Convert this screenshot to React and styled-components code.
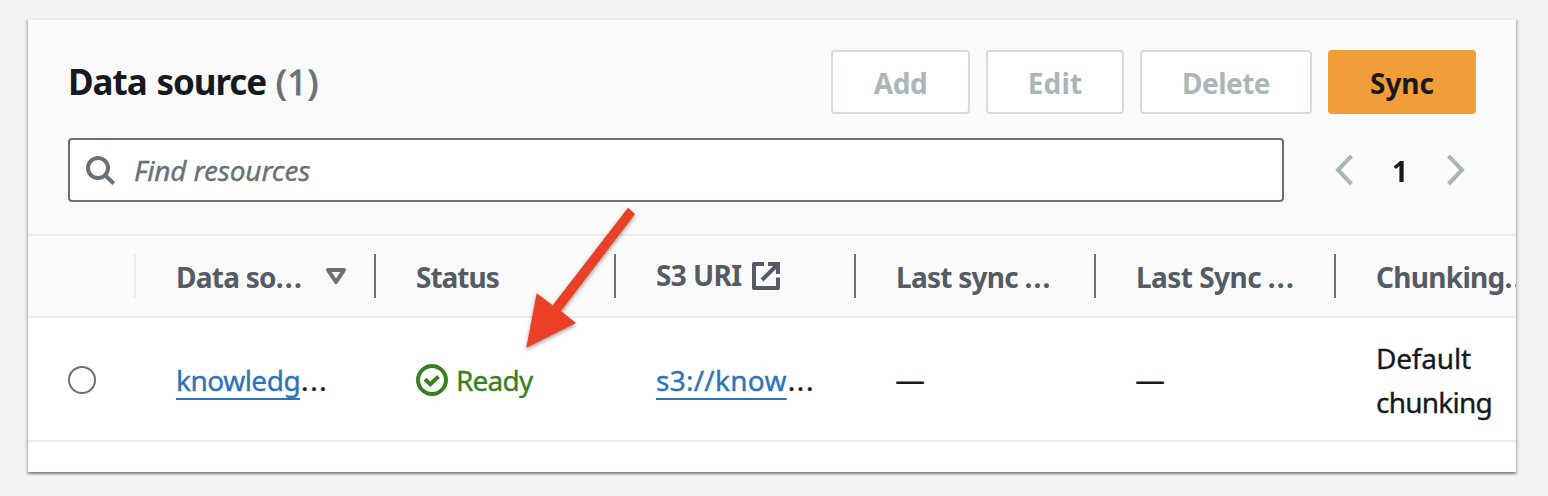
import React from "react";
import styled, { createGlobalStyle, css } from "styled-components";

const GlobalStyle = createGlobalStyle`
  * { box-sizing: border-box; }
  body {
    margin: 0;
    background: #f2f3f3;
    color: #16191f;
    font-family: "Noto Sans", "Open Sans", sans-serif;
    font-size: 28px;
    line-height: 44px;
  }
`;

const Page = styled.main`
  position: relative;
  height: 496px;
  padding: 18px 32px 0 28px;
  overflow: hidden;
`;

const Card = styled.section`
  height: 454px;
  border-top: 2px solid #eaeded;
  background: #fff;
  box-shadow: 0 2px 2px 0 rgba(0, 28, 36, 0.3), 2px 2px 2px 0 rgba(0, 28, 36, 0.15),
    -2px 2px 2px 0 rgba(0, 28, 36, 0.15);
`;

const CardHeader = styled.header`
  height: 216px;
  padding: 30px 40px 0;
  background: #fafafa;
  border-bottom: 2px solid #eaeded;
`;

const TitleRow = styled.div`
  display: flex;
  align-items: center;
  justify-content: space-between;
  height: 64px;
`;

const Title = styled.h2`
  margin: 0 0 1px;
  font-size: 35px;
  font-weight: 700;
  letter-spacing: -1.05px;
  word-spacing: 1.8px;
  white-space: pre;
`;

const Counter = styled.span`
  color: #687078;
  font-weight: 400;
  letter-spacing: 0.6px;
  -webkit-text-stroke: 1px #687078;
`;

const Actions = styled.div`
  display: flex;
  gap: 16px;
`;

const Button = styled.button`
  width: ${(p) => p.$width}px;
  height: 64px;
  padding: 2px 0 0;
  border: 2px solid #d5dbdb;
  border-radius: 4px;
  background: #fff;
  color: #aab7b8;
  font: 700 28px/44px "Noto Sans", sans-serif;
  letter-spacing: ${(p) => p.$spacing}px;
  ${(p) =>
    p.$primary &&
    css`
      border-color: #f19e39;
      background: #f19e39;
      color: #16191f;
    `}
`;

const FilterRow = styled.div`
  display: flex;
  align-items: center;
  margin-top: 24px;
`;

const SearchBox = styled.div`
  display: flex;
  align-items: center;
  gap: 18px;
  width: 1216px;
  height: 64px;
  padding: 0 14px;
  border: 2px solid #687078;
  border-radius: 4px;
  background: #fff;
`;

const Placeholder = styled.span`
  color: #687078;
  font-style: italic;
  letter-spacing: -0.15px;
  -webkit-text-stroke: 0.35px #687078;
`;

const Pagination = styled.nav`
  display: flex;
  align-items: center;
  justify-content: space-between;
  width: 132px;
  margin-left: 50px;
`;

const PageNumber = styled.span`
  padding-top: 1px;
  font-weight: 700;
`;

const columns = "108px repeat(5, 240px) 172px";

const HeadRow = styled.div`
  display: grid;
  grid-template-columns: ${columns};
  align-items: center;
  height: 82px;
  overflow: hidden;
  background: #fafafa;
  border-bottom: 2px solid #eaeded;
`;

const HeadCell = styled.div`
  display: flex;
  align-items: center;
  height: 44px;
  padding-left: 40px;
  padding-right: ${(p) => (p.$last ? 0 : 28)}px;
  border-right: ${(p) => (p.$last ? "0" : `2px solid ${p.$faint ? "#eaeded" : "#687078"}`)};
  color: #545b64;
  font-weight: 700;
  letter-spacing: ${(p) => p.$spacing || 0}px;
  white-space: nowrap;
  justify-content: ${(p) => (p.$split ? "space-between" : "flex-start")};
`;

const Label = styled.span`
  padding-top: 2px;
`;

const Dots = styled.span`
  letter-spacing: 1.2px;
`;

const RaisedLabel = styled.span`
  margin: -2px 8px 0 0;
`;

const BodyRow = styled.div`
  display: grid;
  grid-template-columns: ${columns};
  align-items: center;
  height: 124px;
  overflow: hidden;
  border-bottom: 2px solid #eaeded;
  -webkit-text-stroke: 0.35px;
`;

const Cell = styled.div`
  display: flex;
  align-items: center;
  padding: 2px 0 0 ${(p) => p.$indent ?? 40}px;
  letter-spacing: ${(p) => p.$spacing || 0}px;
`;

const Dash = styled.span`
  font-size: 30px;
  -webkit-text-stroke: 0;
`;

const Radio = styled.span`
  width: 28px;
  height: 28px;
  border: 2px solid #687078;
  border-radius: 50%;
  background: #fff;
`;

const Link = styled.a`
  color: #2e73b8;
  text-decoration: underline;
  text-decoration-thickness: 2px;
  text-underline-offset: 7px;
  text-decoration-skip-ink: none;
`;

const Ellipsis = styled.span`
  letter-spacing: 1.6px;
  padding-left: 1px;
`;

const Status = styled.span`
  display: flex;
  align-items: center;
  gap: 8px;
  color: #3b7f20;
  letter-spacing: -0.8px;
`;

const Wrapped = styled.span`
  display: block;
  letter-spacing: ${(p) => p.$spacing}px;
`;

const Pointer = styled.svg`
  position: absolute;
  left: 516px;
  top: 200px;
  filter: drop-shadow(0 2px 2px rgba(0, 0, 0, 0.4));
`;

const Icon = styled.svg`
  flex: none;
  fill: none;
  stroke: ${(p) => p.$color};
  stroke-width: 4;
`;

const SearchIcon = () => (
  <Icon width="32" height="32" $color="#687078">
    <circle cx="14" cy="14" r="10" />
    <path d="M21 21l8.7 8.7" />
  </Icon>
);

const Chevron = ({ next }) => (
  <Icon width="20" height="32" $color="#aab7b8">
    <path d={next ? "M2.5 2L16 16L2.5 30" : "M17.5 2L4 16L17.5 30"} />
  </Icon>
);

const SortIcon = () => (
  <Icon width="20" height="16" $color="#687078" strokeLinejoin="round">
    <path d="M2 2h16L10 14z" />
  </Icon>
);

const ExternalIcon = () => (
  <Icon width="32" height="32" $color="#545b64">
    <path d="M14 4H4v24h24V17.5" strokeLinejoin="round" />
    <path d="M18 4h10v10M28 4L12 20" />
  </Icon>
);

const CheckIcon = () => (
  <Icon width="32" height="32" $color="#3b7f20">
    <circle cx="16" cy="16" r="14" />
    <path d="M9 15.2l5.3 5L22.5 12.5" />
  </Icon>
);

export default function App() {
  return (
    <>
      <GlobalStyle />
      <Page>
        <Card>
          <CardHeader>
            <TitleRow>
              <Title>
                Data source <Counter>(1)</Counter>
              </Title>
              <Actions>
                <Button $width={139} $spacing={-0.5}>Add</Button>
                <Button $width={138} $spacing={0.2}>Edit</Button>
                <Button $width={172} $spacing={-0.5}>Delete</Button>
                <Button $width={148} $spacing={0} $primary>Sync</Button>
              </Actions>
            </TitleRow>
            <FilterRow>
              <SearchBox>
                <SearchIcon />
                <Placeholder>Find resources</Placeholder>
              </SearchBox>
              <Pagination>
                <Chevron />
                <PageNumber>1</PageNumber>
                <Chevron next />
              </Pagination>
            </FilterRow>
          </CardHeader>
          <HeadRow>
            <HeadCell $faint />
            <HeadCell $split $spacing={-0.75}>
              <Label>Data so<Dots>...</Dots></Label>
              <SortIcon />
            </HeadCell>
            <HeadCell $spacing={-1}>
              <Label>Status</Label>
            </HeadCell>
            <HeadCell $spacing={-0.6}>
              <RaisedLabel>S3 URI</RaisedLabel>
              <ExternalIcon />
            </HeadCell>
            <HeadCell $spacing={-0.75}>
              <Label>Last sync <Dots>...</Dots></Label>
            </HeadCell>
            <HeadCell $spacing={-0.55}>
              <Label>Last Sync <Dots>...</Dots></Label>
            </HeadCell>
            <HeadCell $last $spacing={-0.7}>
              <Label>Chunking<Dots>...</Dots></Label>
            </HeadCell>
          </HeadRow>
          <BodyRow>
            <Cell><Radio /></Cell>
            <Cell $spacing={-0.5}>
              <Link>knowledg</Link>
              <Ellipsis>...</Ellipsis>
            </Cell>
            <Cell>
              <Status>
                <CheckIcon />
                Ready
              </Status>
            </Cell>
            <Cell $spacing={0.25}>
              <Link>s3://know</Link>
              <Ellipsis>...</Ellipsis>
            </Cell>
            <Cell $indent={39}><Dash>—</Dash></Cell>
            <Cell $indent={39}><Dash>—</Dash></Cell>
            <Cell>
              <span>
                <Wrapped $spacing={-0.2}>Default</Wrapped>
                <Wrapped $spacing={-0.75}>chunking</Wrapped>
              </span>
            </Cell>
          </BodyRow>
        </Card>
        <Pointer width="130" height="160">
          <path d="M112 7.7L119 14L45 111L60 123L10.3 147.7L20.7 93.3L36.7 105.3Z" fill="#ea4025" />
        </Pointer>
      </Page>
    </>
  );
}
